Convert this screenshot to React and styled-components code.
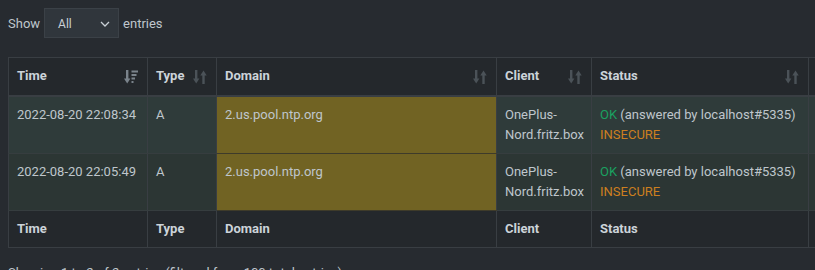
import styled, { createGlobalStyle } from "styled-components"

const GlobalStyle = createGlobalStyle`
  html, body {
    margin: 0;
    background: #272b30;
    overflow: hidden;
  }
  body {
    font-family: "Source Sans Pro", Roboto, "Liberation Sans", sans-serif;
    font-size: 13px;
    color: #bfc6cc;
  }
`

const Page = styled.div`
  padding: 8px;
  width: 1100px;
`

const LengthBar = styled.div`
  display: flex;
  align-items: center;
  gap: 4px;
  height: 30px;
  margin-bottom: 19px;
`

const Select = styled.div`
  box-sizing: border-box;
  width: 75px;
  height: 30px;
  display: flex;
  align-items: center;
  justify-content: space-between;
  padding: 1px 8px 0 13px;
  background: #30363c;
  border: 1px solid #3b4147;
  font-size: 12px;
  color: #c9d0d6;
`

const Table = styled.table`
  border-collapse: collapse;
  table-layout: fixed;
  width: ${p => p.$w}px;
  border: 1px solid #393e43;
`

const HeadCell = styled.th`
  position: relative;
  box-sizing: border-box;
  width: ${p => p.$w}px;
  height: ${p => (p.$foot ? 37 : 38)}px;
  padding: 0 8px;
  text-align: left;
  font-weight: 700;
  color: #ccd3d9;
  background: #24282c;
  border: 1px solid #393e43;
  border-bottom-width: ${p => (p.$foot ? 1 : 2)}px;
  line-height: 20px;
`

const SortIcon = styled.svg`
  position: absolute;
  right: 9px;
  top: 12px;
  width: 14px;
  height: 14px;
`

const Row = styled.tr`
  background: ${p => (p.$odd ? "#2f3b3a" : "#2c3634")};
`

const Cell = styled.td`
  box-sizing: border-box;
  height: 56px;
  padding: 8px;
  vertical-align: top;
  line-height: 20px;
  white-space: nowrap;
  border: 1px solid #393e43;
  border-top: none;
  border-bottom: 1px solid #363d3f;
  background: ${p => (p.$hl ? "#716323" : "transparent")};
  ${p => p.$hl && "border-bottom-color: #3e3b2a;"}
`

const Ok = styled.span`
  color: #1aa160;
`

const Insecure = styled.span`
  color: #cc7f1f;
`

const Info = styled.div`
  margin-top: 15px;
  line-height: 20px;
`

const SortArrows = ({ active }) =>
  active ? (
    <SortIcon viewBox="0 0 14 14">
      <g fill="#7a838b">
        <rect x="2" y="0" width="2.4" height="9" />
        <polygon points="0,8.5 6.4,8.5 3.2,13.5" />
        <rect x="7.5" y="0.5" width="6.5" height="2" />
        <rect x="7.5" y="4" width="5" height="2" />
        <rect x="7.5" y="7.5" width="3.5" height="2" />
        <rect x="7.5" y="11" width="2" height="2" />
      </g>
    </SortIcon>
  ) : (
    <SortIcon viewBox="0 0 14 14">
      <g fill="#4b5258">
        <rect x="2" y="0" width="2.4" height="9" />
        <polygon points="0,8.5 6.4,8.5 3.2,13.5" />
        <rect x="9.3" y="5" width="2.4" height="9" />
        <polygon points="7.3,5.5 13.7,5.5 10.5,0.5" />
      </g>
    </SortIcon>
  )

const columns = [
  { key: "time", label: "Time", w: 139, sort: "active" },
  { key: "type", label: "Type", w: 69, sort: true },
  { key: "domain", label: "Domain", w: 280, sort: true },
  { key: "client", label: "Client", w: 95, sort: true },
  { key: "status", label: "Status", w: 217, sort: true },
  { key: "reply", label: "Reply", w: 100, sort: true },
]

const tableWidth = columns.reduce((s, c) => s + c.w, 0)

const rows = [
  { time: "2022-08-20 22:08:34", reply: "IP", delay: "(0.3ms)" },
  { time: "2022-08-20 22:05:49", reply: "IP", delay: "" },
]

const App = () => {
  return (
    <Page>
      <GlobalStyle />
      <LengthBar>
        <span>Show</span>
        <Select>
          <span>All</span>
          <svg width="10" height="6" viewBox="0 0 10 6">
            <path d="M1 1l4 4 4-4" stroke="#c9d0d6" strokeWidth="1.3" fill="none" />
          </svg>
        </Select>
        <span>entries</span>
      </LengthBar>
      <Table $w={tableWidth}>
        <thead>
          <tr>
            {columns.map(c => (
              <HeadCell key={c.key} $w={c.w}>
                {c.label}
                {c.sort && <SortArrows active={c.sort === "active"} />}
              </HeadCell>
            ))}
          </tr>
        </thead>
        <tbody>
          {rows.map((r, i) => (
            <Row key={r.time} $odd={i === 0}>
              <Cell>{r.time}</Cell>
              <Cell>A</Cell>
              <Cell $hl>2.us.pool.ntp.org</Cell>
              <Cell>
                OnePlus-
                <br />
                Nord.fritz.box
              </Cell>
              <Cell>
                <Ok>OK</Ok> (answered by localhost#5335)
                <br />
                <Insecure>INSECURE</Insecure>
              </Cell>
              <Cell>
                {r.reply}
                <br />
                <Insecure>{r.delay}</Insecure>
              </Cell>
            </Row>
          ))}
        </tbody>
        <tfoot>
          <tr>
            {columns.map(c => (
              <HeadCell key={c.key} $w={c.w} $foot>
                {c.label}
              </HeadCell>
            ))}
          </tr>
        </tfoot>
      </Table>
      <Info>Showing 1 to 2 of 2 entries (filtered from 100 total entries)</Info>
    </Page>
  )
}

export default App
